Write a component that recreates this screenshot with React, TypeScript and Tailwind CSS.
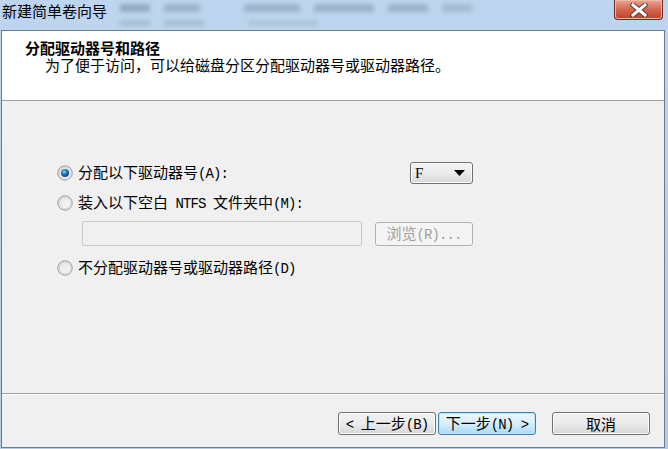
import React from 'react';

// half-width latin in the dialog font is a serif monospace
const M = ({ children }: { children: React.ReactNode }) => (
  <span className="font-['Liberation_Mono',monospace] text-[14px] tracking-[-0.9px] whitespace-pre">{children}</span>
);

const Radio = ({ checked }: { checked?: boolean }) => (
  <svg width="16" height="16" viewBox="0 0 16 16" className="shrink-0">
    <defs>
      <linearGradient id={checked ? 'rgOn' : 'rgOff'} x1="0" y1="0" x2="1" y2="1">
        <stop offset="0" stopColor="#e2e2e2" />
        <stop offset="1" stopColor="#fbfbfb" />
      </linearGradient>
      <radialGradient id="dot" cx="0.4" cy="0.35" r="0.7">
        <stop offset="0" stopColor="#8fd0f7" />
        <stop offset="0.5" stopColor="#1a70b8" />
        <stop offset="1" stopColor="#0c3d72" />
      </radialGradient>
    </defs>
    <circle cx="8" cy="8" r="7.2" fill={`url(#${checked ? 'rgOn' : 'rgOff'})`} stroke="#8e8f8f" strokeWidth="0.9" />
    <circle cx="8" cy="8" r="5.6" fill="none" stroke="#d0d0d0" strokeWidth="0.8" />
    {checked && <circle cx="8" cy="8" r="4" fill="url(#dot)" />}
  </svg>
);

const Btn = ({ children, primary }: { children: React.ReactNode; primary?: boolean }) => (
  <div
    className={
      primary
        ? 'w-[98px] h-[23px] rounded-[3px] border border-[#3c7fb1] bg-gradient-to-b from-[#eaf6fd] via-[#d9f0fc] to-[#a7d9f5] shadow-[inset_0_0_0_1px_#c0e4f8] flex items-center justify-center'
        : 'w-[98px] h-[23px] rounded-[3px] border border-[#707070] bg-gradient-to-b from-[#f2f2f2] via-[#ebebeb] to-[#d6d6d6] shadow-[inset_0_0_0_1px_#fcfcfc] flex items-center justify-center'
    }
  >
    {children}
  </div>
);

const App = () => {
  return (
    <div className="w-[668px] h-[449px] overflow-hidden bg-gradient-to-b from-[#bdd5ef] to-[#b3cbe6] flex flex-col font-['Noto_Sans_CJK_SC',sans-serif] text-[15px] leading-[17px] text-black">
      {/* title bar */}
      <div className="h-[30px] flex items-start shrink-0">
        <div className="pl-[2px] pt-[2px] text-[15px] leading-[18px] text-black w-[110px]">新建简单卷向导</div>
        <div className="flex-1 flex flex-col gap-[8px] pt-[4px] opacity-60 blur-[2px]">
          <div className="flex gap-[14px] items-center">
            <div className="w-[30px] h-[8px] bg-[#7a8da3] ml-[10px]" />
            <div className="w-[36px] h-[8px] bg-[#8a9cb2]" />
            <div className="w-[56px] h-[8px] bg-[#8a9cb2] ml-[30px]" />
            <div className="w-[60px] h-[8px] bg-[#8a9cb2]" />
            <div className="w-[40px] h-[8px] bg-[#8a9cb2]" />
            <div className="w-[30px] h-[8px] bg-[#98aac0]" />
          </div>
          <div className="flex gap-[14px] items-center">
            <div className="w-[30px] h-[6px] bg-[#9aaec4] ml-[10px]" />
            <div className="w-[40px] h-[6px] bg-[#9aaec4]" />
            <div className="w-[70px] h-[6px] bg-[#a6b8cc] ml-[30px]" />
          </div>
        </div>
        <div className="w-[49px] h-[20px] mr-[5px] rounded-b-[4px] border border-t-0 border-[#6b2a20] bg-gradient-to-b from-[#e9a798] via-[#d4654f] to-[#c0402a] shadow-[inset_0_0_0_1px_#f0b8a8] flex items-center justify-center">
          <svg width="18" height="14" viewBox="0 0 18 14">
            <path d="M3 2 L15 12 M15 2 L3 12" stroke="#5b3a36" strokeWidth="5" strokeLinecap="square" />
            <path d="M3 2 L15 12 M15 2 L3 12" stroke="#ffffff" strokeWidth="3" strokeLinecap="square" />
          </svg>
        </div>
      </div>

      {/* window */}
      <div className="ml-[1px] w-[664px] h-[418px] border border-[#6a7c94] bg-[#f0f0f0] flex flex-col">
        <div className="h-[70px] bg-white border-b border-[#a0a0a0] pt-[8px] pl-[23px] shrink-0">
          <div className="font-bold leading-[17px]">分配驱动器号和路径</div>
          <div className="pl-[20px] leading-[17px]">为了便于访问，可以给磁盘分区分配驱动器号或驱动器路径。</div>
        </div>

        <div className="h-[292px] pl-[55px] pt-[61px] flex flex-col shrink-0">
          <div className="h-[22px] flex items-center">
            <div className="w-[353px] flex items-center gap-[5px]">
              <Radio checked />
              <span>分配以下驱动器号<M>(A):</M></span>
            </div>
            <div className="w-[63px] h-[22px] rounded-[3px] border border-[#707070] bg-gradient-to-b from-[#f2f2f2] via-[#ebebeb] to-[#d6d6d6] shadow-[inset_0_0_0_1px_#fcfcfc] flex items-center justify-between pl-[4px] pr-[7px]">
              <span className="font-['Liberation_Serif',serif] text-[15px]">F</span>
              <svg width="11" height="6" viewBox="0 0 11 6">
                <polygon points="0,0 11,0 5.5,6" fill="#000" />
              </svg>
            </div>
          </div>
          <div className="h-[22px] mt-[8px] flex items-center gap-[5px]">
            <Radio />
            <span>装入以下空白<M> NTFS </M>文件夹中<M>(M):</M></span>
          </div>
          <div className="mt-[7px] ml-[25px] flex items-center gap-[13px]">
            <div className="w-[280px] h-[25px] border border-[#c8c8c8] rounded-[2px] bg-[#f0f0f0]" />
            <div className="w-[98px] h-[24px] rounded-[3px] border border-[#adb2b5] bg-[#f4f4f4] flex items-center justify-center text-[#a0a0a0]">
              <span>浏览<M>(R)...</M></span>
            </div>
          </div>
          <div className="h-[22px] mt-[11px] flex items-center gap-[5px]">
            <Radio />
            <span>不分配驱动器号或驱动器路径<M>(D)</M></span>
          </div>
        </div>

        <div className="flex-1 border-t border-[#a0a0a0] shadow-[inset_0_1px_0_#ffffff] pt-[18px] pr-[14px] flex justify-end items-start">
          <div className="flex gap-[2px]">
            <Btn><span><M>&lt; </M>上一步<M>(B)</M></span></Btn>
            <Btn primary><span>下一步<M>(N) &gt;</M></span></Btn>
          </div>
          <div className="ml-[16px]">
            <Btn>取消</Btn>
          </div>
        </div>
      </div>
    </div>
  );
};

export default App;
